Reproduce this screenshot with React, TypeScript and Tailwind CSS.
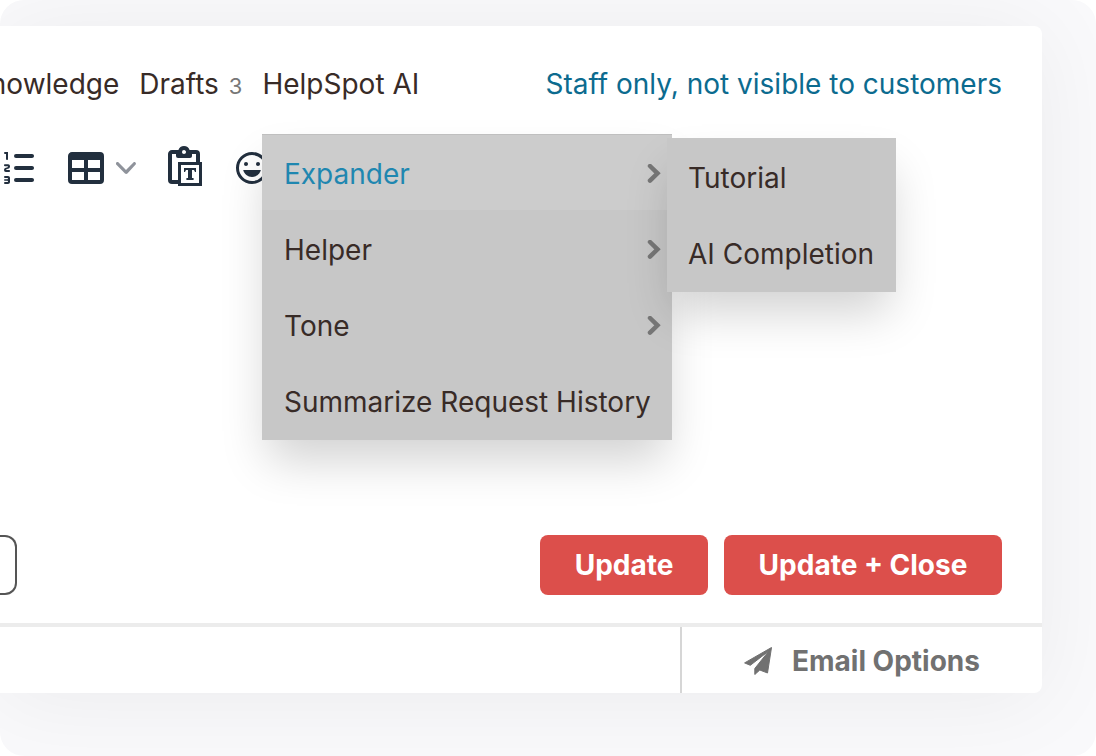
import type { ReactNode } from 'react';

const tabs = [
  { label: 'Knowledge' },
  { label: 'Drafts', count: 3 },
  { label: 'HelpSpot AI' },
];

const menuItems = [
  { label: 'Expander', active: true, nested: true },
  { label: 'Helper', nested: true },
  { label: 'Tone', nested: true },
  { label: 'Summarize Request History' },
];

const expanderItems = ['Tutorial', 'AI Completion'];

function ToolButton({ label, children }: { label: string; children: ReactNode }) {
  return (
    <button type="button" aria-label={label} className="flex shrink-0 items-center gap-1.5 text-[#222f3e]">
      {children}
    </button>
  );
}

function ToolIcon({ d }: { d: string }) {
  return (
    <svg className="size-12" viewBox="0 0 24 24" fill="currentColor" fillRule="evenodd">
      <path d={d} />
    </svg>
  );
}

function Toolbar() {
  return (
    <div className="mt-[42px] -ml-1 flex items-center">
      <ToolButton label="Numbered list">
        <ToolIcon d="M10 17h8c.6 0 1 .4 1 1s-.4 1-1 1h-8a1 1 0 0 1 0-2Zm0-6h8c.6 0 1 .4 1 1s-.4 1-1 1h-8a1 1 0 0 1 0-2Zm0-6h8c.6 0 1 .4 1 1s-.4 1-1 1h-8a1 1 0 1 1 0-2ZM6 4v3.5c0 .3-.2.5-.5.5a.5.5 0 0 1-.5-.5V5h-.5a.5.5 0 0 1 0-1H6Zm-1 8.8.2.2h1.3c.3 0 .5.2.5.5s-.2.5-.5.5H4.9a1 1 0 0 1-.9-1V13c0-.4.3-.8.6-1l1.2-.4.2-.3a.2.2 0 0 0-.2-.2H4.5a.5.5 0 0 1-.5-.5c0-.3.2-.5.5-.5h1.6c.5 0 .9.4.9 1v.1c0 .4-.3.8-.6 1l-1.2.4-.2.3ZM7 17v2c0 .6-.4 1-1 1H4.5a.5.5 0 0 1 0-1h1.2c.2 0 .3-.1.3-.3 0-.2-.1-.3-.3-.3H4.4a.4.4 0 1 1 0-.8h1.3c.2 0 .3-.1.3-.3 0-.2-.1-.3-.3-.3H4.5a.5.5 0 1 1 0-1H6c.6 0 1 .4 1 1Z" />
      </ToolButton>
      <div className="ml-4.5 flex">
        <ToolButton label="Table">
          <ToolIcon d="M19 4a2 2 0 0 1 2 2v12a2 2 0 0 1-2 2H5a2 2 0 0 1-2-2V6c0-1.1.9-2 2-2h14ZM5 14v4h6v-4H5Zm14 0h-6v4h6v-4Zm0-6h-6v4h6V8ZM5 12h6V8H5v4Z" />
          <svg className="size-5 text-[#8f939b]" viewBox="0 0 10 10" fill="currentColor">
            <path d="M8.7 2.2c.3-.3.8-.3 1 0 .4.4.4.9 0 1.2L5.7 7.8c-.3.3-.9.3-1.2 0L.2 3.4a.8.8 0 0 1 0-1.2c.3-.3.8-.3 1.1 0L5 6l3.7-3.8Z" />
          </svg>
        </ToolButton>
      </div>
      <div className="ml-6 flex gap-5">
        <ToolButton label="Paste as text">
          <ToolIcon d="M18 9V5h-2v1c0 .6-.4 1-1 1H9a1 1 0 0 1-1-1V5H6v13h3V9h9ZM9 20H6a2 2 0 0 1-2-2V5c0-1.1.9-2 2-2h3.2A3 3 0 0 1 12 1a3 3 0 0 1 2.8 2H18a2 2 0 0 1 2 2v4h1v12H9v-1Zm1.5-9.5v9h9v-9h-9ZM12 3a1 1 0 0 0-1 1c0 .5.4 1 1 1s1-.5 1-1-.4-1-1-1Zm0 9h6v2h-.5l-.5-1h-1v4h.8v1h-3.6v-1h.8v-4h-1l-.5 1H12v-2Z" />
        </ToolButton>
        <ToolButton label="Emojis">
          <ToolIcon d="M9 11c.6 0 1-.4 1-1s-.4-1-1-1a1 1 0 0 0-1 1c0 .6.4 1 1 1Zm6 0c.6 0 1-.4 1-1s-.4-1-1-1a1 1 0 0 0-1 1c0 .6.4 1 1 1Zm-3 5.5c2.1 0 4-1.5 4.4-3.5H7.6c.5 2 2.3 3.5 4.4 3.5ZM12 4a8 8 0 1 0 0 16 8 8 0 0 0 0-16Zm0 14.5a6.5 6.5 0 1 1 0-13 6.5 6.5 0 0 1 0 13Z" />
        </ToolButton>
      </div>
    </div>
  );
}

function AiMenu() {
  return (
    <div className="absolute top-[108px] left-[262px] w-[410px] bg-[#c7c7c7] pb-0.5 shadow-[0_26px_44px_-6px_rgba(0,0,0,0.18)]">
      {menuItems.map((item) => (
        <button
          key={item.label}
          type="button"
          className={`flex h-19 w-full items-center justify-between pt-1 pr-2.5 pl-[22px] whitespace-nowrap ${
            item.active ? 'bg-[#cccccc] text-[#1f87b0] shadow-[inset_0_1px_0_#bfbfbf]' : ''
          }`}
        >
          {item.label}
          {item.nested && (
            <svg
              className="h-5 w-4 text-[#777777]"
              viewBox="0 0 16 20"
              fill="none"
              stroke="currentColor"
              strokeWidth="4.5"
              strokeLinecap="round"
            >
              <path d="M4 2 11.5 9.3 4 16.6" />
            </svg>
          )}
        </button>
      ))}
      {/* Expander submenu */}
      <div className="absolute top-1 left-[405px] w-[229px] bg-[#c7c7c7] pb-0.5 shadow-[0_26px_44px_-6px_rgba(0,0,0,0.18)]">
        {expanderItems.map((label) => (
          <button key={label} type="button" className="flex h-19 w-full items-center pt-1 pl-[21px] whitespace-nowrap">
            {label}
          </button>
        ))}
      </div>
    </div>
  );
}

export default function App() {
  return (
    <div className="overflow-hidden rounded-3xl bg-[#f9f9fb] pt-[26px] pr-[54px] pb-[63px] font-['Inter',sans-serif] text-[28px] leading-9 text-[#382b27]">
      <main className="relative rounded-r-lg bg-white shadow-[0_6px_90px_rgba(20,20,0,0.06)]">
        <div className="flex items-center justify-between pt-10 pr-10">
          <nav className="-ml-[29px] flex gap-5 whitespace-nowrap">
            {tabs.map((tab) => (
              <a key={tab.label} href="#" className="flex items-baseline gap-2.5">
                {tab.label}
                {tab.count && <span className="text-[22px] leading-6 text-[#777777]">{tab.count}</span>}
              </a>
            ))}
          </nav>
          <a href="#" className="whitespace-nowrap text-[#0c6b8f]">
            Staff only, not visible to customers
          </a>
        </div>

        <Toolbar />

        <div className="mt-[343px] flex items-center justify-between pr-10 pb-7">
          <input
            type="text"
            aria-label="Status"
            className="h-15 w-[17px] rounded-r-xl border-2 border-l-0 border-[#555555] bg-white"
          />
          <div className="flex gap-4 font-bold text-white">
            <button type="button" className="h-15 w-42 rounded-lg bg-[#dc4f4b]">
              Update
            </button>
            <button type="button" className="h-15 w-[278px] rounded-lg bg-[#dc4f4b]">
              Update + Close
            </button>
          </div>
        </div>

        <footer className="flex justify-end border-t-4 border-[#ececec]">
          <button
            type="button"
            className="flex h-[66px] w-[362px] items-center justify-center gap-5 border-l-2 border-[#d6d6d6] pt-0.5 font-bold text-[#717171]"
          >
            <svg className="size-7" viewBox="0 0 28 28" fill="currentColor" stroke="currentColor" strokeLinejoin="round">
              <path d="M27.5.5 23.5 26 15.8 23 10.8 27.5V21.5L24.8 4 6.3 18.3.6 15.9Z" />
            </svg>
            Email Options
          </button>
        </footer>

        <AiMenu />
      </main>
    </div>
  );
}
